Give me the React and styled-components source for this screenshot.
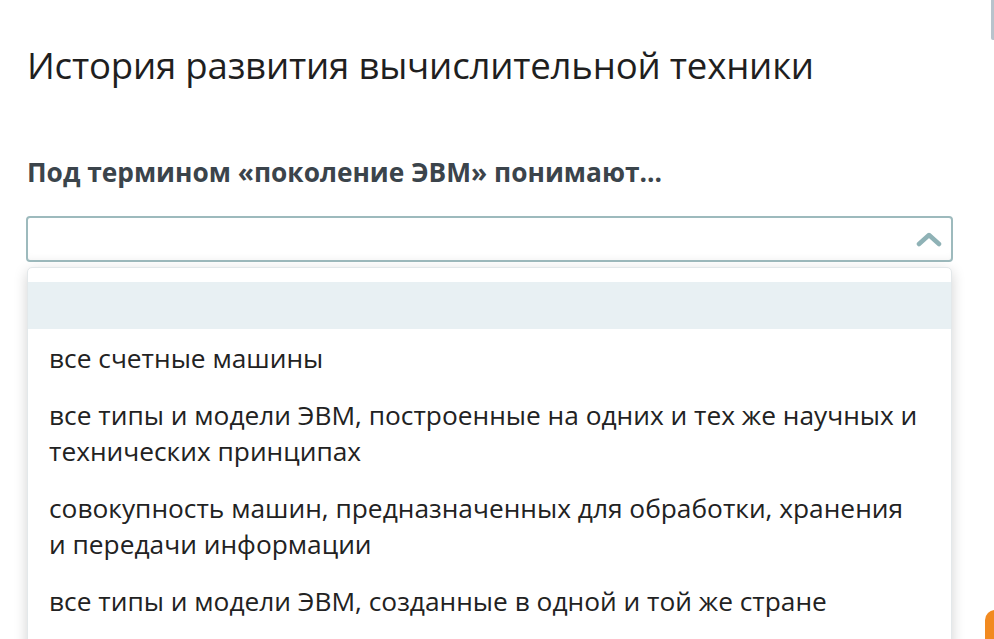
import React from "react";
import styled, { createGlobalStyle } from "styled-components";

const GlobalStyle = createGlobalStyle`
  html, body {
    margin: 0;
    padding: 0;
    background: #fff;
    overflow: hidden;
  }
  body {
    font-family: "Open Sans", "Noto Sans", sans-serif;
    color: #222;
  }
`;

const Page = styled.div`
  position: relative;
  width: 994px;
  height: 639px;
  padding: 40px 41px 0 26px;
  box-sizing: border-box;
  overflow: hidden;
`;

const Title = styled.h1`
  margin: 0 0 0 1px;
  font-size: 36.6px;
  font-weight: 400;
  line-height: 50px;
  color: #1f1f1f;
  letter-spacing: -0.2px;
`;

const Question = styled.h2`
  margin: 64px 0 0 1px;
  font-size: 26.3px;
  font-weight: 700;
  line-height: 36px;
  color: #3b444b;
`;

const Select = styled.div`
  margin-top: 26px;
  height: 46px;
  border: 2px solid #9dbabd;
  border-radius: 4px;
  box-sizing: border-box;
  display: flex;
  align-items: center;
  justify-content: flex-end;
  padding-right: 9px;
  background: #fff;
  box-shadow: inset 0 -6px 8px -6px rgba(0, 0, 0, 0.06);
`;

const Menu = styled.ul`
  list-style: none;
  margin: 5px 1px 0 1px;
  padding: 14px 0 0 0;
  background: #fff;
  border-radius: 5px;
  border: 1px solid #e3e8ea;
  box-shadow: 0 4px 14px rgba(0, 0, 0, 0.18);
  height: 420px;
`;

const Option = styled.li`
  padding: ${(p) => (p.$empty ? "0" : "0 28px 0 21px")};
  height: ${(p) => (p.$empty ? "47px" : "auto")};
  background: ${(p) => (p.$active ? "#e8f0f3" : "transparent")};
  font-size: 26.3px;
  line-height: 36px;
  color: #222;
  margin-bottom: ${(p) => (p.$empty ? "11px" : "21px")};
`;

const Fab = styled.div`
  position: absolute;
  left: 985px;
  top: 610px;
  width: 60px;
  height: 60px;
  border-radius: 10px;
  background: #f28a20;
`;

const EdgeLine = styled.div`
  position: absolute;
  right: 0;
  top: 0;
  width: 3px;
  height: 40px;
  background: #b8c3cc;
  border-radius: 0 0 0 2px;
`;

const Chevron = () => (
  <svg width="26" height="18" viewBox="0 0 26 18">
    <path
      d="M3 14 L13 5 L23 14"
      fill="none"
      stroke="#8fb2b6"
      strokeWidth="4.5"
      strokeLinecap="round"
      strokeLinejoin="round"
    />
  </svg>
);

const options = [
  "все счетные машины",
  "все типы и модели ЭВМ, построенные на одних и тех же научных и технических принципах",
  "совокупность машин, предназначенных для обработки, хранения и передачи информации",
  "все типы и модели ЭВМ, созданные в одной и той же стране",
];

export default function App() {
  return (
    <>
      <GlobalStyle />
      <Page>
        <EdgeLine />
        <Title>История развития вычислительной техники</Title>
        <Question>Под термином «поколение ЭВМ» понимают...</Question>
        <Select>
          <Chevron />
        </Select>
        <Menu>
          <Option $empty $active />
          {options.map((o) => (
            <Option key={o}>{o}</Option>
          ))}
        </Menu>
        <Fab />
      </Page>
    </>
  );
}
